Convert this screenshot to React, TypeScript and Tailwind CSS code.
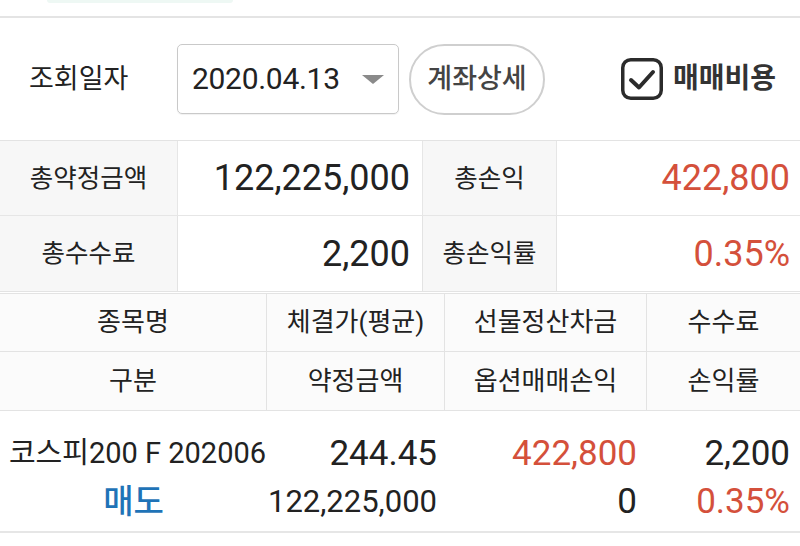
import React from "react";

const F = "font-['Roboto','Noto_Sans_CJK_KR',sans-serif]";

export default function App() {
  return (
    <div className={`w-[800px] h-[546px] bg-white overflow-hidden text-[#222] ${F}`}>
      {/* top strip */}
      <div className="h-[16px] flex">
        <div className="ml-[47px] w-[186px] h-[3px] bg-[#eef8f4] rounded-b-full" />
      </div>
      <div className="h-[2px] bg-[#e4e4e4]" />

      {/* filter row */}
      <div className="h-[122px] flex items-center">
        <div className="w-[177px] pl-[29px] text-[27px] leading-none">조회일자</div>
        <div className="w-[222px] h-[70px] border border-[#c9c9c9] rounded-[5px] flex items-center pl-[14px] pr-[14px] shadow-[0_1px_1px_rgba(0,0,0,0.06)]">
          <span className="text-[30px] leading-none tracking-[-0.3px]">2020.04.13</span>
          <span className="ml-auto w-0 h-0 border-l-[11px] border-r-[11px] border-t-[9px] border-l-transparent border-r-transparent border-t-[#8a8a8a]" />
        </div>
        <div className="ml-[10px] w-[136px] h-[71px] rounded-full border-[2px] border-[#cfcfcf] flex items-center justify-center text-[27px] font-medium text-[#444]">
          계좌상세
        </div>
        <div className="ml-[76px] flex items-center">
          <svg width="42" height="42" viewBox="0 0 42 42">
            <rect x="1.75" y="1.75" width="38.5" height="38.5" rx="8" fill="none" stroke="#2b2b2b" strokeWidth="3.5" />
            <path d="M10 22 L18 29.5 L32 14" fill="none" stroke="#2b2b2b" strokeWidth="4" strokeLinecap="round" strokeLinejoin="round" />
          </svg>
          <span className="ml-[10px] text-[28px] font-bold text-[#333] leading-none">매매비용</span>
        </div>
      </div>

      {/* summary table */}
      <div className="border-t border-[#e3e3e3] grid grid-cols-[178px_245px_134px_1fr]">
        <div className="h-[75px] bg-[#f7f7f7] border-r border-b border-[#e6e6e6] flex items-center justify-center text-[25.5px]">총약정금액</div>
        <div className="h-[75px] border-r border-b border-[#e6e6e6] flex items-center justify-end pr-[12px] text-[36px]">122,225,000</div>
        <div className="h-[75px] bg-[#f7f7f7] border-r border-b border-[#e6e6e6] flex items-center justify-center text-[25.5px]">총손익</div>
        <div className="h-[75px] border-b border-[#e6e6e6] flex items-center justify-end pr-[10px] text-[36px] text-[#d4503b]">422,800</div>
        <div className="h-[76px] bg-[#f7f7f7] border-r border-b border-[#e3e3e3] flex items-center justify-center text-[25.5px]">총수수료</div>
        <div className="h-[76px] border-r border-b border-[#e3e3e3] flex items-center justify-end pr-[12px] text-[36px]">2,200</div>
        <div className="h-[76px] bg-[#f7f7f7] border-r border-b border-[#e3e3e3] flex items-center justify-center text-[25.5px]">총손익률</div>
        <div className="h-[76px] border-b border-[#e3e3e3] flex items-center justify-end pr-[10px] text-[36px] text-[#d4503b]">0.35%</div>
      </div>

      {/* header table */}
      <div className="mt-[1px] border-t border-[#e3e3e3] grid grid-cols-[267px_178px_202px_1fr] bg-[#fbfbfb] text-[26px]">
        <div className="h-[58px] border-r border-b border-[#e3e3e3] flex items-center justify-center">종목명</div>
        <div className="h-[58px] border-r border-b border-[#e3e3e3] flex items-center justify-center">체결가(평균)</div>
        <div className="h-[58px] border-r border-b border-[#e3e3e3] flex items-center justify-center">선물정산차금</div>
        <div className="h-[58px] border-b border-[#e3e3e3] flex items-center justify-center">수수료</div>
        <div className="h-[59px] border-r border-b border-[#e3e3e3] flex items-center justify-center">구분</div>
        <div className="h-[59px] border-r border-b border-[#e3e3e3] flex items-center justify-center">약정금액</div>
        <div className="h-[59px] border-r border-b border-[#e3e3e3] flex items-center justify-center">옵션매매손익</div>
        <div className="h-[59px] border-b border-[#e3e3e3] flex items-center justify-center">손익률</div>
      </div>

      {/* data row */}
      <div className="h-[122px] pt-[19px] border-b-[2px] border-[#e6e6e6] grid grid-cols-[267px_178px_202px_1fr] content-start">
        <div className="h-[48px] flex items-center justify-center whitespace-nowrap text-[29px] pl-[8px]">코스피200 F 202006</div>
        <div className="h-[48px] flex items-center justify-end pr-[8px] text-[35px]">244.45</div>
        <div className="h-[48px] flex items-center justify-end pr-[10px] text-[35px] text-[#d4503b]">422,800</div>
        <div className="h-[48px] flex items-center justify-end pr-[10px] text-[35px]">2,200</div>
        <div className="h-[48px] flex items-center justify-center text-[33px] font-medium text-[#1f73b7]">매도</div>
        <div className="h-[48px] flex items-center justify-end pr-[8px] text-[31px]">122,225,000</div>
        <div className="h-[48px] flex items-center justify-end pr-[10px] text-[35px]">0</div>
        <div className="h-[48px] flex items-center justify-end pr-[10px] text-[35px] text-[#d4503b]">0.35%</div>
      </div>
    </div>
  );
}
